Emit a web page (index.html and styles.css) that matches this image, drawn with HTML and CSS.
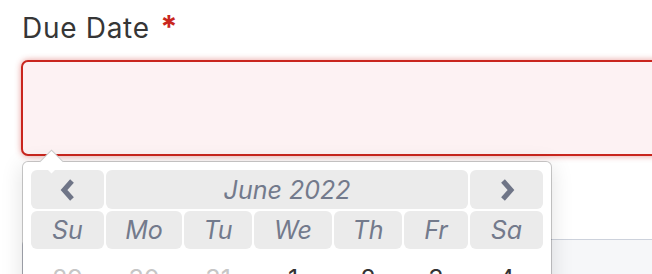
FILE: index.html
```html
<!DOCTYPE html>
<html>
<head>
<meta charset="utf-8">
<link rel="stylesheet" href="styles.css">
</head>
<body>
<div class="form">
  <label class="label">Due Date <span class="req">*</span></label>
  <div class="input"></div>
  <div class="next-field"></div>

  <div class="datepicker">
    <div class="arrow"></div>
    <div class="grid">
      <div class="cell head nav">
        <svg width="18" height="24" viewBox="0 0 18 24"><path d="M13 3 L5 12 L13 21" fill="none" stroke="#6f7587" stroke-width="5" stroke-linejoin="miter" stroke-linecap="butt"/></svg>
      </div>
      <div class="cell head title">June 2022</div>
      <div class="cell head nav">
        <svg width="18" height="24" viewBox="0 0 18 24"><path d="M5 3 L13 12 L5 21" fill="none" stroke="#6f7587" stroke-width="5" stroke-linejoin="miter" stroke-linecap="butt"/></svg>
      </div>

      <div class="cell dow">Su</div>
      <div class="cell dow">Mo</div>
      <div class="cell dow">Tu</div>
      <div class="cell dow">We</div>
      <div class="cell dow">Th</div>
      <div class="cell dow">Fr</div>
      <div class="cell dow">Sa</div>

      <div class="day old">29</div>
      <div class="day old">30</div>
      <div class="day old">31</div>
      <div class="day">1</div>
      <div class="day">2</div>
      <div class="day">3</div>
      <div class="day">4</div>
    </div>
  </div>
</div>
</body>
</html>
```

FILE: styles.css
```css
html, body {
  margin: 0;
  padding: 0;
  background: #ffffff;
  overflow: hidden;
}

body {
  width: 652px;
  height: 274px;
  font-family: "Inter", "Liberation Sans", sans-serif;
}

.form {
  position: relative;
  padding-left: 21px;
  padding-top: 11px;
}

.label {
  display: block;
  height: 34px;
  font-size: 28px;
  line-height: 34px;
  color: #363636;
  letter-spacing: 0.7px;
  padding-left: 1px;
}

.req {
  color: #c9261e;
  font-weight: 700;
  font-size: 31px;
  line-height: 0;
  margin-left: 2px;
}

.input {
  margin-top: 15px;
  width: 720px;
  height: 92px;
  border: 2px solid #c9261e;
  border-radius: 7px;
  background: #fdf2f3;
  box-shadow: 0 0 6px rgba(201, 38, 30, 0.45);
}

.next-field {
  margin-top: 83px;
  margin-left: 1px;
  width: 720px;
  height: 100px;
  border: 1px solid #cdd2dc;
  border-radius: 6px;
  background: #f6f7f9;
}

.datepicker {
  position: absolute;
  left: 22px;
  top: 161px;
  width: 512px;
  padding: 8px;
  background: #ffffff;
  border: 1px solid rgba(0, 0, 0, 0.2);
  border-radius: 6px;
  box-shadow: 0 4px 22px rgba(0, 0, 0, 0.12);
  background-clip: padding-box;
}

.arrow {
  position: absolute;
  left: 20px;
  top: -9px;
  width: 16px;
  height: 16px;
  background: #ffffff;
  border-top: 1px solid rgba(0, 0, 0, 0.2);
  border-left: 1px solid rgba(0, 0, 0, 0.2);
  transform: rotate(45deg);
}

.grid {
  display: grid;
  grid-template-columns: 73px 76px 68px 78px 68px 64px 73px;
  grid-template-rows: 39px 38px 56px;
  gap: 2px;
}

.cell {
  background: #ebebeb;
  border-radius: 6px;
  display: flex;
  align-items: center;
  justify-content: center;
  color: #737a8c;
  font-style: italic;
  font-size: 25px;
}

.title {
  grid-column: span 5;
}

.nav svg {
  display: block;
}

.day {
  display: flex;
  align-items: center;
  justify-content: center;
  font-size: 25px;
  color: #333333;
}

.day.old {
  color: #c6c6c6;
}
```
